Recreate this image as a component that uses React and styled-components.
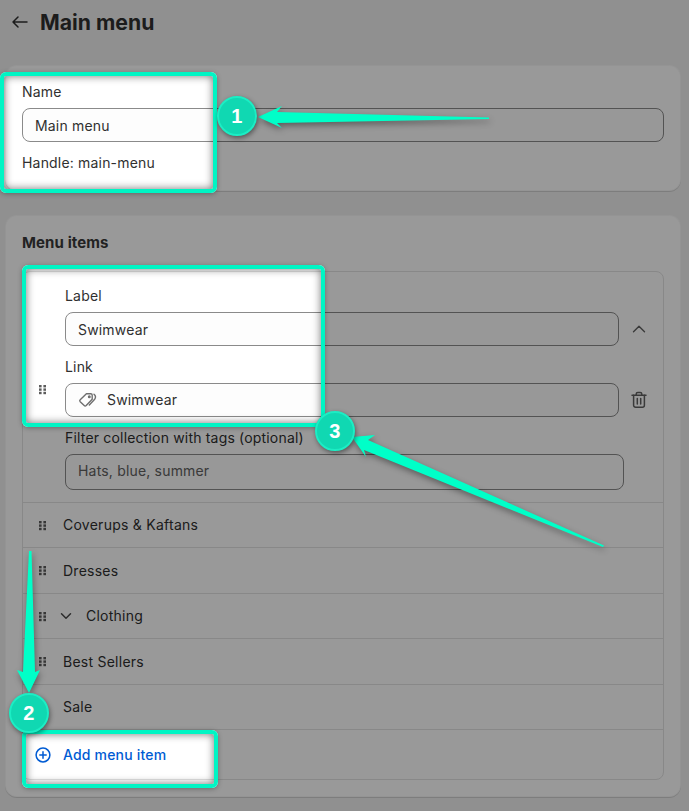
import styled, { createGlobalStyle } from 'styled-components';
import { ChevronDown, ChevronUp } from 'lucide-react';

const GlobalStyle = createGlobalStyle`
  html, body {
    margin: 0;
    padding: 0;
    background: #f1f1f1;
  }
  * {
    box-sizing: border-box;
  }
`;

const Page = styled.div`
  position: relative;
  width: 689px;
  height: 811px;
  overflow: hidden;
  padding: 0 8px 0 5px;
  background: #f1f1f1;
  color: #303030;
  font-family: Inter, "Liberation Sans", sans-serif;
  font-size: 14px;
  line-height: 20px;
  letter-spacing: 0.18px;
`;

const Header = styled.header`
  display: flex;
  align-items: center;
  gap: 12px;
  height: 44px;
  padding-left: 7px;
  margin-bottom: 21px;
  color: #303030;
`;

const Title = styled.h1`
  margin: 0;
  font-size: 21.2px;
  line-height: 24px;
  font-weight: 700;
  letter-spacing: 0;
`;

const Card = styled.section`
  background: #fff;
  border-radius: 12px;
  padding: 17px;
  margin-bottom: 24px;
  box-shadow: 0 1px 0 rgba(0, 0, 0, 0.13), inset 0 0 0 1px rgba(0, 0, 0, 0.03);
`;

const NameCard = styled(Card)`
  height: 126px;
`;

const MenuCard = styled(Card)`
  height: 582px;
  padding-top: 18px;
`;

const CardTitle = styled.h2`
  margin: 0 0 18px;
  font-size: 15px;
  line-height: 20px;
  font-weight: 650;
  letter-spacing: 0.1px;
  color: #3a3a3a;
`;

const FieldLabel = styled.div`
  height: 20px;
  margin-bottom: 6px;
`;

const Input = styled.div`
  display: flex;
  align-items: center;
  gap: 9px;
  height: ${(p) => p.$height || 34}px;
  width: ${(p) => (p.$width ? `${p.$width}px` : '100%')};
  padding: ${(p) => (p.$placeholder ? '0 12px 2px' : '2px 12px 0')};
  border: 1px solid #8a8a8a;
  border-radius: 8px;
  background: #fdfdfd;
  color: ${(p) => (p.$placeholder ? '#616161' : '#303030')};
`;

const LinkInput = styled(Input)`
  padding: 0 12px;
`;

const Hint = styled.div`
  margin-top: 11px;
`;

const ItemList = styled.div`
  border: 1px solid #e3e3e3;
  border-radius: 8px;
  height: 509px;
`;

const OpenItem = styled.div`
  position: relative;
  height: 230.5px;
  padding: 14px 0 0 42px;
  border-bottom: 1px solid #e3e3e3;
`;

const FieldRow = styled.div`
  display: flex;
  align-items: flex-end;
  gap: 9px;
  margin-bottom: 11px;
`;

const FieldColumn = styled.div`
  flex: none;
  width: ${(p) => p.$width}px;
`;

const IconButton = styled.div`
  display: flex;
  align-items: center;
  justify-content: center;
  width: 22px;
  height: 34px;
  color: #616161;
`;

const OpenHandle = styled.div`
  position: absolute;
  left: 15px;
  top: 108px;
`;

const Row = styled.div`
  display: flex;
  align-items: center;
  height: 45.5px;
  padding: 1px 0 0 15px;
  border-bottom: 1px solid #e3e3e3;
  letter-spacing: 0.25px;
`;

const RowText = styled.span`
  margin-left: ${(p) => p.$indent || 16}px;
  color: #303030;
`;

const RowChevron = styled.span`
  display: flex;
  margin-left: 10px;
  color: #4a4a4a;
`;

const AddRow = styled.div`
  display: flex;
  align-items: center;
  gap: 12px;
  height: 49px;
  padding-left: 12px;
  color: #005bd3;
  font-weight: 550;
`;

const Dimmer = styled.svg`
  position: absolute;
  inset: 0;
  pointer-events: none;
`;

const Spotlight = styled.div`
  position: absolute;
  left: ${(p) => p.$x}px;
  top: ${(p) => p.$y}px;
  width: ${(p) => p.$w}px;
  height: ${(p) => p.$h}px;
  border: 4px solid #00f5c4;
  border-radius: 6px;
  box-shadow: inset 0 0 9px rgba(0, 0, 0, 0.55), 0 1px 5px rgba(0, 0, 0, 0.3);
`;

const Badge = styled.div`
  position: absolute;
  left: ${(p) => p.$x - 20}px;
  top: ${(p) => p.$y - 20}px;
  display: flex;
  align-items: center;
  justify-content: center;
  width: 40px;
  height: 40px;
  border: 2px solid #1cedc4;
  border-radius: 50%;
  background: #10d8b2;
  color: #fff;
  font-family: "Liberation Sans", Arial, sans-serif;
  font-size: 20px;
  font-weight: 700;
  box-shadow: 1px 2px 5px rgba(0, 0, 0, 0.45);
`;

const Arrows = styled.svg`
  position: absolute;
  inset: 0;
  pointer-events: none;
  filter: drop-shadow(1px 3px 3px rgba(0, 0, 0, 0.4));
`;

const spots = [
  { x: 0, y: 72, w: 217, h: 121 },
  { x: 22, y: 265, w: 303, h: 162 },
  { x: 22, y: 730, w: 196, h: 58 },
];

const rows = [
  { label: 'Coverups & Kaftans' },
  { label: 'Dresses' },
  { label: 'Clothing', nested: true },
  { label: 'Best Sellers' },
  { label: 'Sale' },
];

const BackArrow = () => (
  <svg width="16" height="16" viewBox="0 0 16 16" fill="none" stroke="#303030" strokeWidth="1.5" strokeLinecap="round" strokeLinejoin="round">
    <path d="M15 8H1M6 3 1 8l5 5" />
  </svg>
);

const DragHandle = () => (
  <svg width="9" height="11" viewBox="0 0 9 11" fill="#5c5c5c">
    <rect x="1" y="1" width="2.6" height="2.4" />
    <rect x="5.4" y="1" width="2.6" height="2.4" />
    <rect x="1" y="4.4" width="2.6" height="2.4" />
    <rect x="5.4" y="4.4" width="2.6" height="2.4" />
    <rect x="1" y="7.8" width="2.6" height="2.4" />
    <rect x="5.4" y="7.8" width="2.6" height="2.4" />
  </svg>
);

const TagIcon = () => (
  <svg width="20" height="18" viewBox="0 0 20 18" fill="none" stroke="#6f6f6f" strokeWidth="1.4" strokeLinejoin="round" strokeLinecap="round">
    <path d="M2.200 8.800 8.400 2.800h4.400c.8 0 1.400.6 1.400 1.400v4L8.200 14.500c-.6.600-1.400.600-2 0L2.200 10.700c-.5-.5-.5-1.400 0-1.900Z" />
    <path d="M16 3.200c1.500 1.200 1.800 3.300.7 5L11.300 14" />
    <circle cx="11.300" cy="5.700" r=".8" />
  </svg>
);

const TrashIcon = () => (
  <svg width="16" height="18" viewBox="0 0 16 18" fill="none" stroke="#616161" strokeWidth="1.5" strokeLinecap="round" strokeLinejoin="round">
    <path d="M1 4.2h14" />
    <path d="M5.2 4V3a1.6 1.6 0 0 1 1.6-1.6h2.4A1.6 1.6 0 0 1 10.800 3v1" />
    <path d="M2.600 4.200v10a2 2 0 0 0 2 2h6.800a2 2 0 0 0 2-2v-10" />
    <path d="M6.300 7.600v5.400M9.700 7.600v5.400" />
  </svg>
);

const PlusCircle = () => (
  <svg width="16" height="16" viewBox="0 0 16 16" fill="none" stroke="#005bd3" strokeWidth="1.5" strokeLinecap="round">
    <circle cx="8" cy="8" r="6.900" />
    <path d="M8 4.800v6.400M4.800 8h6.400" />
  </svg>
);

const App = () => {
  return (
    <Page>
      <GlobalStyle />

      <Header>
        <BackArrow />
        <Title>Main menu</Title>
      </Header>

      <NameCard>
        <FieldLabel>Name</FieldLabel>
        <Input>Main menu</Input>
        <Hint>Handle: main-menu</Hint>
      </NameCard>

      <MenuCard>
        <CardTitle>Menu items</CardTitle>
        <ItemList>
          <OpenItem>
            <OpenHandle><DragHandle /></OpenHandle>
            <FieldRow>
              <FieldColumn $width={554}>
                <FieldLabel>Label</FieldLabel>
                <Input>Swimwear</Input>
              </FieldColumn>
              <IconButton><ChevronUp size={22} strokeWidth={1.5} /></IconButton>
            </FieldRow>
            <FieldRow>
              <FieldColumn $width={554}>
                <FieldLabel>Link</FieldLabel>
                <LinkInput><TagIcon />Swimwear</LinkInput>
              </FieldColumn>
              <IconButton><TrashIcon /></IconButton>
            </FieldRow>
            <FieldLabel>Filter collection with tags (optional)</FieldLabel>
            <Input $height={36} $width={559} $placeholder>Hats, blue, summer</Input>
          </OpenItem>

          {rows.map((row) => (
            <Row key={row.label}>
              <DragHandle />
              {row.nested && <RowChevron><ChevronDown size={18} strokeWidth={2} /></RowChevron>}
              <RowText $indent={row.nested ? 11 : 16}>{row.label}</RowText>
            </Row>
          ))}

          <AddRow>
            <PlusCircle />
            Add menu item
          </AddRow>
        </ItemList>
      </MenuCard>

      <Dimmer width="689" height="811" viewBox="0 0 689 811">
        <defs>
          <mask id="holes">
            <rect width="689" height="811" fill="white" />
            {spots.map((s) => (
              <rect key={s.y} x={s.x} y={s.y} width={s.w} height={s.h} rx="6" fill="black" />
            ))}
          </mask>
        </defs>
        <rect width="689" height="811" fill="rgba(0,0,0,0.4)" mask="url(#holes)" />
      </Dimmer>

      {spots.map((s) => (
        <Spotlight key={s.y} $x={s.x} $y={s.y} $w={s.w} $h={s.h} />
      ))}

      <Arrows width="689" height="811" viewBox="0 0 689 811" fill="#00ffc8">
        <polygon points="258,117 282,106 277,112 489,117.6 489,119 277,123 282,128" />
        <polygon points="29,551 31.500,551 35,672 40,670 29,693 17,670 23,672" />
        <polygon points="604,545.500 368,440 375,435 352,437 366,457 364,450 603,547" />
      </Arrows>

      <Badge $x={237} $y={116}>1</Badge>
      <Badge $x={29} $y={713}>2</Badge>
      <Badge $x={335} $y={431}>3</Badge>
    </Page>
  );
};

export default App;
